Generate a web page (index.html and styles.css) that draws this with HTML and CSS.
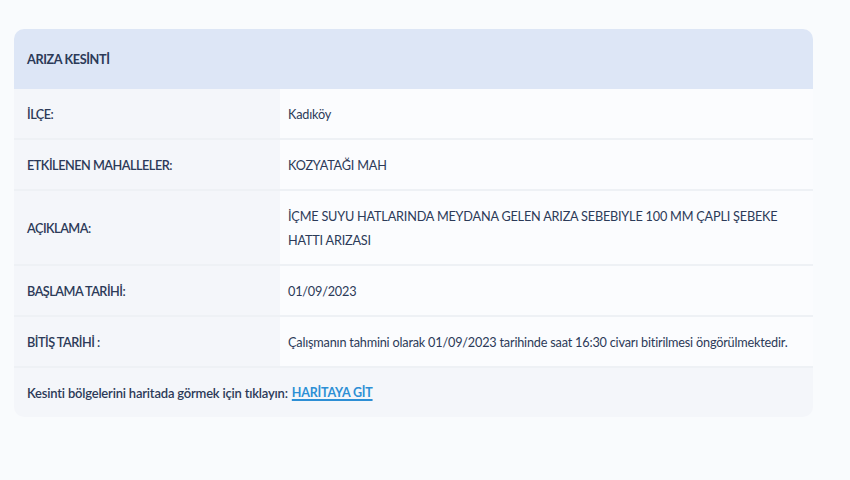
FILE: index.html
```html
<!DOCTYPE html>
<html lang="tr">
<head>
<meta charset="utf-8">
<link rel="stylesheet" href="styles.css">
</head>
<body>
<div class="card">
  <div class="card-head">ARIZA KESİNTİ</div>
  <div class="row">
    <div class="label">İLÇE:</div>
    <div class="value">Kadıköy</div>
  </div>
  <div class="row">
    <div class="label">ETKİLENEN MAHALLELER:</div>
    <div class="value">KOZYATAĞI MAH</div>
  </div>
  <div class="row row-tall">
    <div class="label">AÇIKLAMA:</div>
    <div class="value">İÇME SUYU HATLARINDA MEYDANA GELEN ARIZA SEBEBIYLE 100 MM ÇAPLI ŞEBEKE HATTI ARIZASI</div>
  </div>
  <div class="row">
    <div class="label">BAŞLAMA TARİHİ:</div>
    <div class="value">01/09/2023</div>
  </div>
  <div class="row">
    <div class="label">BİTİŞ TARİHİ :</div>
    <div class="value">Çalışmanın tahmini olarak 01/09/2023 tarihinde saat 16:30 civarı bitirilmesi öngörülmektedir.</div>
  </div>
  <div class="card-foot">Kesinti bölgelerini haritada görmek için tıklayın: <a class="map-link" href="#">HARİTAYA GİT</a></div>
</div>
</body>
</html>
```
FILE: styles.css
```css
html, body {
  margin: 0;
  padding: 0;
  background: #f9fbfd;
}
body {
  font-family: "Lato", "Liberation Sans", sans-serif;
  color: #2c3a58;
  padding: 29px 0 0 14px;
}
.card {
  width: 799px;
  border-radius: 10px;
  overflow: hidden;
  background: #fbfcfe;
  font-size: 12px;
  letter-spacing: -0.2px;
}
.card-head {
  height: 60px;
  display: flex;
  align-items: center;
  padding-left: 13px;
  background: #dde6f6;
  font-weight: 700;
  font-size: 12.7px;
  letter-spacing: -0.4px;
}
.row {
  display: grid;
  grid-template-columns: 266px 1fr;
  min-height: 49px;
  border-bottom: 2px solid #eef1f5;
}
.row-tall {
  min-height: 73px;
}
.label {
  background: #f4f6fa;
  padding-left: 13px;
  display: flex;
  align-items: center;
  font-weight: 600;
  font-size: 12.7px;
  letter-spacing: -0.5px;
}
.value {
  padding: 0 12px 0 8px;
  display: flex;
  align-items: center;
  line-height: 24px;
  font-size: 12.7px;
}
.card-foot {
  height: 49px;
  display: flex;
  align-items: center;
  padding-left: 13px;
  background: #f4f6fa;
  font-weight: 600;
  font-size: 13px;
}
.map-link {
  margin-left: 4px;
  color: #2d8fd5;
  font-weight: 700;
  font-size: 12.5px;
  text-decoration: underline;
  text-decoration-thickness: 2px;
  text-underline-offset: 2px;
}
```
